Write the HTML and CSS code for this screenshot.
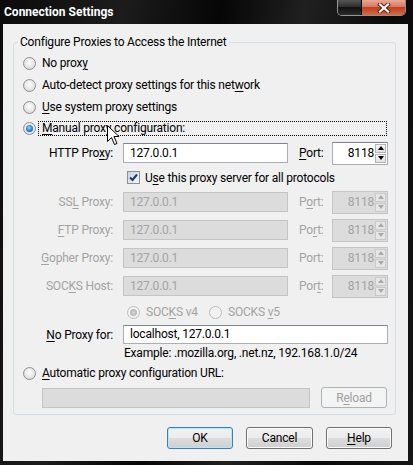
FILE: index.html
```html
<!DOCTYPE html>
<html lang="en">
<head>
  <meta charset="UTF-8" />
  <title>Connection Settings</title>
  <link rel="stylesheet" href="styles.css">
</head>
<body>

  <div class="window">
    <!-- Title bar -->
    <div class="titlebar">
      <span class="title">Connection Settings</span>
      <div class="caption">
        <span class="cap-btn"></span>
        <span class="cap-btn close">
          <svg width="14" height="10" viewBox="0 0 14 10">
            <path d="M3 1.5 L11 8.5 M11 1.5 L3 8.5" stroke="#5a1a0c" stroke-width="4" stroke-linecap="square"/>
            <path d="M3 1.5 L11 8.5 M11 1.5 L3 8.5" stroke="#fff" stroke-width="2.2" stroke-linecap="square"/>
          </svg>
        </span>
      </div>
    </div>

    <div class="client">
      <fieldset class="group">
        <legend>Configure Proxies to Access the Internet</legend>

        <div class="opt"><span class="radio"></span><span>No prox<u>y</u></span></div>
        <div class="opt"><span class="radio"></span><span>Auto-detect proxy settings for this net<u>w</u>ork</span></div>
        <div class="opt"><span class="radio"></span><span><u>U</u>se system proxy settings</span></div>
        <div class="opt manual"><span class="radio checked"></span><span class="focus"><u>M</u>anual proxy configuration:</span></div>

        <div class="prow">
          <span class="lbl">HTTP Pro<u>x</u>y:</span>
          <div class="field">127.0.0.1</div>
          <span class="plbl"><u>P</u>ort:</span>
          <div class="spin"><span class="val">8118</span><span class="arrows"><span class="arr up"></span><span class="arr down"></span></span></div>
        </div>

        <div class="crow">
          <span class="check">
            <svg width="11" height="11" viewBox="0 0 11 11"><path d="M2 5.5 L4.5 8 L9 2.5" fill="none" stroke="#1d3a6b" stroke-width="2"/></svg>
          </span>
          <span>U<u>s</u>e this proxy server for all protocols</span>
        </div>

        <div class="prow dis">
          <span class="lbl">SS<u>L</u> Proxy:</span>
          <div class="field">127.0.0.1</div>
          <span class="plbl">P<u>o</u>rt:</span>
          <div class="spin"><span class="val">8118</span><span class="arrows"><span class="arr up"></span><span class="arr down"></span></span></div>
        </div>
        <div class="prow dis">
          <span class="lbl"><u>F</u>TP Proxy:</span>
          <div class="field">127.0.0.1</div>
          <span class="plbl">Po<u>r</u>t:</span>
          <div class="spin"><span class="val">8118</span><span class="arrows"><span class="arr up"></span><span class="arr down"></span></span></div>
        </div>
        <div class="prow dis">
          <span class="lbl"><u>G</u>opher Proxy:</span>
          <div class="field">127.0.0.1</div>
          <span class="plbl">Port:</span>
          <div class="spin"><span class="val">8118</span><span class="arrows"><span class="arr up"></span><span class="arr down"></span></span></div>
        </div>
        <div class="prow dis">
          <span class="lbl">SOC<u>K</u>S Host:</span>
          <div class="field">127.0.0.1</div>
          <span class="plbl">Por<u>t</u>:</span>
          <div class="spin"><span class="val">8118</span><span class="arrows"><span class="arr up"></span><span class="arr down"></span></span></div>
        </div>

        <div class="vrow">
          <div class="vopt"><span class="radio checked"></span><span>SOC<u>K</u>S v4</span></div>
          <div class="vopt"><span class="radio"></span><span>SOCKS <u>v</u>5</span></div>
        </div>

        <div class="prow noproxy">
          <span class="lbl"><u>N</u>o Proxy for:</span>
          <div class="field wide">localhost, 127.0.0.1</div>
        </div>
        <div class="example">Example: .mozilla.org, .net.nz, 192.168.1.0/24</div>

        <div class="opt"><span class="radio"></span><span><u>A</u>utomatic proxy configuration URL:</span></div>
        <div class="urow">
          <div class="field url"></div>
          <button class="btn reload" disabled>R<u>e</u>load</button>
        </div>
      </fieldset>

      <div class="actions">
        <button class="btn default">OK</button>
        <button class="btn cancel">Cancel</button>
        <button class="btn"><u>H</u>elp</button>
      </div>
    </div>

    <!-- mouse pointer resting on the manual option -->
    <svg class="pointer" width="13" height="21" viewBox="0 0 13 21">
      <path d="M0.5 0.5 L0.5 16.5 L4.5 12.5 L7.5 19.5 L10 18.5 L7 11.5 L12 11.5 Z" fill="#fff" stroke="#000" stroke-width="1" stroke-linejoin="miter"/>
    </svg>
  </div>

</body>
</html>
```

FILE: styles.css
```css
* {
  margin: 0;
  padding: 0;
  box-sizing: border-box;
}

body {
  width: 413px;
  height: 465px;
  overflow: hidden;
  background: #000;
  font-family: "Segoe UI", Roboto, "Noto Sans", sans-serif;
  font-size: 12px;
  letter-spacing: -0.2px;
  color: #000;
}

u {
  text-decoration: underline;
  text-underline-offset: 2px;
}

/* Window frame */
.window {
  position: relative;
  width: 413px;
  height: 465px;
  display: flex;
  flex-direction: column;
  background: linear-gradient(100deg, #0b0b0b 0%, #1c1c1c 25%, #060606 45%, #202020 62%, #0a0a0a 80%, #161616 100%);
}

.titlebar {
  height: 24px;
  display: flex;
  align-items: flex-start;
}

.title {
  line-height: 24px;
  padding-left: 4px;
  color: #fff;
  font-weight: bold;
  letter-spacing: 0;
}

.caption {
  margin-left: auto;
  margin-right: 7px;
  height: 16px;
  display: flex;
  border: 1px solid rgba(255, 255, 255, 0.55);
  border-top: none;
  border-radius: 0 0 5px 5px;
  overflow: hidden;
}

.cap-btn {
  width: 24px;
  border-right: 1px solid #000;
  background: linear-gradient(#555 0%, #2a2a2a 50%, #111 50%, #2b2b2b 100%);
}

.cap-btn.close {
  width: 43px;
  border-right: none;
  display: flex;
  align-items: center;
  justify-content: center;
  background: linear-gradient(#e9a896 0%, #d77a62 45%, #c2401e 50%, #d46a45 100%);
}

/* Dialog body */
.client {
  flex: 1;
  margin: 0 5px 4px 3px;
  background: #f0f0f0;
  display: flex;
  flex-direction: column;
}

.group {
  margin: 11px 12px 0 10px;
  border: 1px solid #d5dfe5;
  border-radius: 3px;
  padding: 3px 0 6px;
}

.group legend {
  margin-left: 4px;
  padding: 0 2px;
  line-height: 14px;
}

/* Radio options */
.opt {
  height: 22px;
  display: flex;
  align-items: center;
  padding-left: 9px;
}

.opt .radio {
  margin-right: 6px;
}

.opt.manual {
  height: 21px;
}

.focus {
  flex: 1;
  height: 15px;
  line-height: 13px;
  margin-left: -4px;
  margin-right: 8px;
  padding-left: 3px;
  border: 1px dotted #000;
}

.radio {
  width: 13px;
  height: 13px;
  flex: none;
  border-radius: 50%;
  border: 1px solid #8e8f8f;
  background: radial-gradient(circle at 50% 40%, #fdfdfd 0%, #e6e6e6 55%, #cfcfcf 100%);
  display: flex;
  align-items: center;
  justify-content: center;
}

.radio.checked::after {
  content: '';
  width: 7px;
  height: 7px;
  border-radius: 50%;
  background: radial-gradient(circle at 45% 40%, #9fe0ff 0%, #2f8fd6 45%, #0d3f84 100%);
}

/* Proxy host rows */
.prow {
  height: 28px;
  display: flex;
  align-items: center;
}

.prow .lbl {
  width: 99px;
  margin-right: 10px;
  text-align: right;
}

.field {
  width: 165px;
  height: 20px;
  padding-left: 6px;
  line-height: 18px;
  background: #fff;
  border: 1px solid #abadb3;
  border-top-color: #7f8590;
}

.field.wide {
  width: 265px;
  height: 19px;
  line-height: 17px;
}

.prow.noproxy {
  height: 21px;
}

.plbl {
  width: 33px;
  margin-left: 11px;
}

.spin {
  width: 56px;
  height: 23px;
  display: flex;
  background: #fff;
  border: 1px solid #abadb3;
  border-top-color: #7f8590;
}

.spin .val {
  flex: 1;
  text-align: right;
  padding-right: 1px;
  line-height: 21px;
}

.arrows {
  width: 11px;
  margin: 1px 1px 1px 0;
  display: flex;
  flex-direction: column;
  gap: 1px;
}

.arr {
  flex: 1;
  display: flex;
  align-items: center;
  justify-content: center;
  border: 1px solid #b5b5b5;
  background: linear-gradient(#f7f7f7, #e0e0e0);
}

.arr::after {
  content: '';
  border-left: 3px solid transparent;
  border-right: 3px solid transparent;
}

.arr.up::after {
  border-bottom: 4px solid #000;
}

.arr.down::after {
  border-top: 4px solid #000;
}

.dis {
  color: #a3a3a3;
}

.dis .field,
.dis .spin,
.field.url {
  background: #dcdcdc;
  border-color: #c4c4c4;
}

.dis .arr {
  border-color: #c8c8c8;
  background: #e6e6e6;
}

.dis .arr.up::after {
  border-bottom-color: #a8a8a8;
}

.dis .arr.down::after {
  border-top-color: #a8a8a8;
}

/* Use-for-all checkbox */
.crow {
  height: 21px;
  display: flex;
  align-items: center;
  padding-left: 113px;
}

.check {
  width: 13px;
  height: 13px;
  margin-right: 5px;
  border: 1px solid #8e8f8f;
  background: linear-gradient(135deg, #c9d3df, #f4f7fb);
  display: flex;
  align-items: center;
  justify-content: center;
}

/* SOCKS version choice */
.vrow {
  height: 24px;
  display: flex;
  align-items: center;
  padding-left: 113px;
  color: #a3a3a3;
}

.vopt {
  display: flex;
  align-items: center;
}

.vopt:first-child {
  width: 82px;
}

.vopt .radio {
  margin-right: 6px;
  border-color: #bdbdbd;
  background: #f2f2f2;
}

.vopt .radio.checked::after {
  background: radial-gradient(circle, #d4d4d4 0%, #a9a9a9 100%);
}

.example {
  height: 17px;
  line-height: 17px;
  padding-left: 110px;
}

.urow {
  height: 24px;
  display: flex;
  align-items: flex-end;
  padding-left: 28px;
}

.field.url {
  width: 268px;
}

/* Push buttons */
.btn {
  width: 66px;
  height: 22px;
  font: inherit;
  letter-spacing: inherit;
  color: #000;
  border: 1px solid #707070;
  border-radius: 3px;
  background: linear-gradient(#f2f2f2 0%, #ebebeb 50%, #dddddd 50%, #cfcfcf 100%);
  box-shadow: inset 0 0 0 1px #fbfbfb;
}

.btn.default {
  border-color: #3c7fb1;
  box-shadow: inset 0 0 0 1px #b7e4f8;
}

.btn.cancel {
  width: 67px;
}

.btn.reload {
  height: 21px;
  margin-left: 11px;
  color: #a0a0a0;
  border-color: #adb2b5;
  background: #f4f4f4;
  box-shadow: none;
}

.actions {
  display: flex;
  justify-content: flex-end;
  gap: 13px;
  margin-top: 12px;
  padding-right: 16px;
}

.pointer {
  position: absolute;
  left: 107px;
  top: 125px;
}
```
